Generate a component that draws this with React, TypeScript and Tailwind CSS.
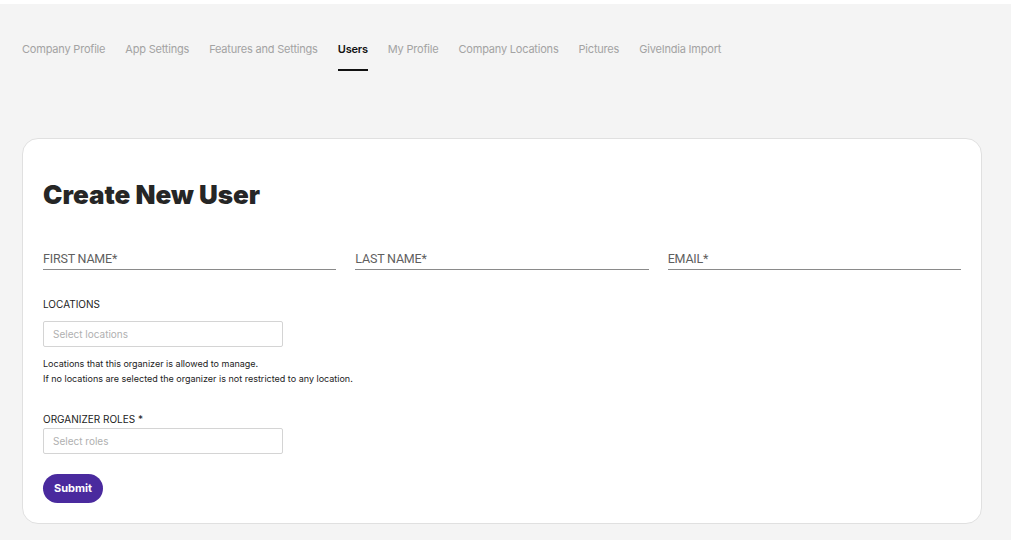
const tabs = [
  'Company Profile',
  'App Settings',
  'Features and Settings',
  'Users',
  'My Profile',
  'Company Locations',
  'Pictures',
  'GiveIndia Import',
];

const Field = ({ label }: { label: string }) => (
  <div className="border-b border-[#8a8a8a]">
    <span className="font-['Roboto',sans-serif] text-[12.5px] leading-[16px] tracking-[-0.2px] text-[#5f5f5f]">
      {label}
    </span>
  </div>
);

const SelectBox = ({ placeholder }: { placeholder: string }) => (
  <div className="flex h-[26px] w-[240px] items-center rounded-[2px] border border-[#d4d4d4] px-[9px] text-[10px] text-[#b0b0b0]">
    {placeholder}
  </div>
);

export default function App() {
  return (
    <div className="min-h-[540px] bg-[#f4f4f4] font-['Inter',sans-serif]">
      <div className="h-[4px] bg-white" />
      <nav className="flex gap-[20px] px-[22px] pt-[36px]">
        {tabs.map((t) => (
          <div
            key={t}
            className={
              t === 'Users'
                ? 'border-b-2 border-[#111] pb-[11px] text-[11px] leading-[18px] font-semibold tracking-[-0.2px] text-[#111]'
                : 'border-b-2 border-transparent pb-[11px] text-[11px] leading-[18px] tracking-[-0.2px] text-[#a3a3a3]'
            }
          >
            {t}
          </div>
        ))}
      </nav>

      <div className="mx-[22px] mt-[67px] w-[960px] rounded-[16px] border border-[#e0e0e0] bg-white px-[20px] pt-[40px] pb-[20px]">
        <h1 className="text-[26px] leading-[32px] font-black text-[#262626]">
          Create New User
        </h1>

        <div className="mt-[34px] grid grid-cols-3 gap-[19px] pb-[3px]">
          <Field label="FIRST NAME*" />
          <Field label="LAST NAME*" />
          <Field label="EMAIL*" />
        </div>

        <div className="mt-[24px] text-[10px] leading-[14px] text-[#222]">LOCATIONS</div>
        <div className="mt-[10px]">
          <SelectBox placeholder="Select locations" />
        </div>
        <div className="mt-[9px] text-[9px] leading-[15px] text-[#222]">
          <p>Locations that this organizer is allowed to manage.</p>
          <p>If no locations are selected the organizer is not restricted to any location.</p>
        </div>

        <div className="mt-[26px] text-[10px] leading-[14px] text-[#222]">ORGANIZER ROLES *</div>
        <div className="mt-[2px]">
          <SelectBox placeholder="Select roles" />
        </div>

        <button className="mt-[20px] flex h-[29px] w-[60px] items-center justify-center rounded-full bg-[#4a2a9e] text-[11px] font-bold text-white">
          Submit
        </button>
      </div>
    </div>
  );
}
